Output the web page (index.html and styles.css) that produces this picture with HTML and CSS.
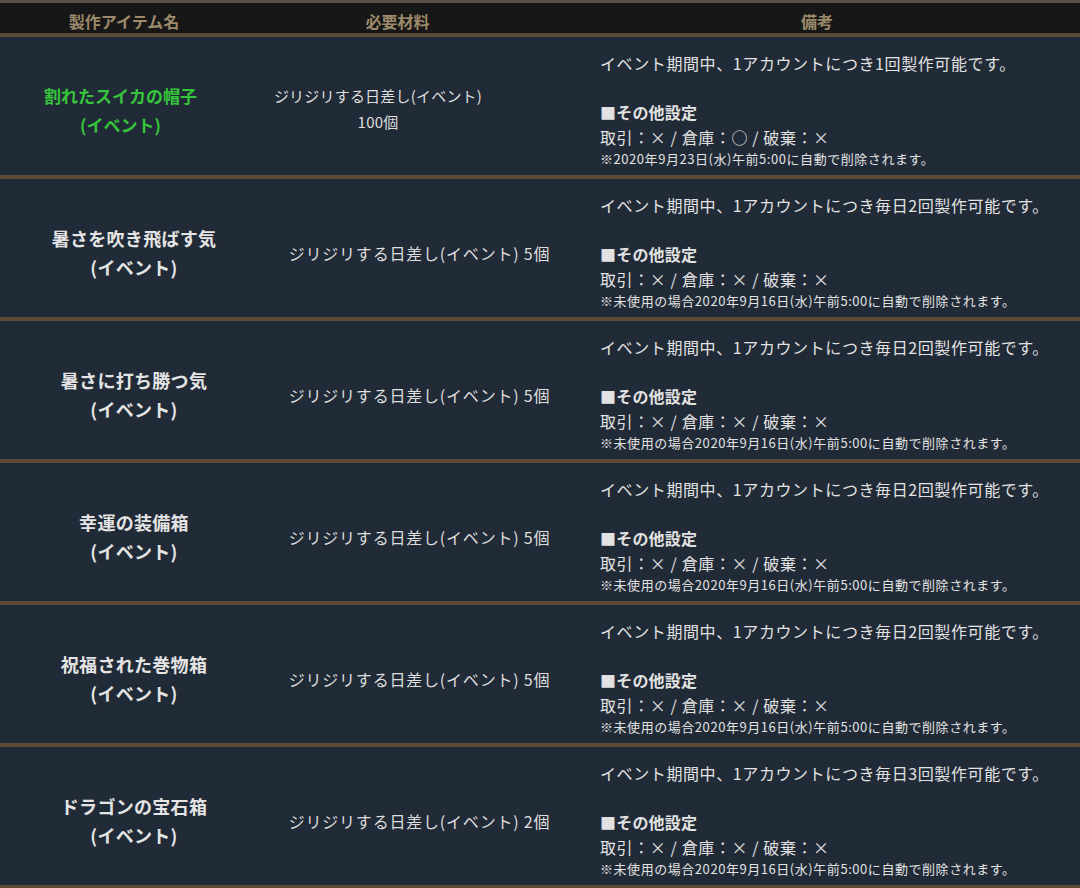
FILE: index.html
```html
<!DOCTYPE html>
<html lang="ja">
<head>
<meta charset="utf-8">
<title>製作アイテム一覧</title>
<link rel="stylesheet" href="styles.css">
</head>
<body>
<div class="craft">
  <div class="head">
    <div class="hcell">製作アイテム名</div>
    <div class="hcell">必要材料</div>
    <div class="hcell hnote">備考</div>
  </div>

  <div class="row row-first">
    <div class="name green">割れたスイカの帽子<br>(イベント)</div>
    <div class="mat">ジリジリする日差し(イベント)<br>100個</div>
    <div class="note">
      <p class="line">イベント期間中、1アカウントにつき1回製作可能です。</p>
      <p class="line blank"></p>
      <p class="line strong">■その他設定</p>
      <p class="line">取引：× / 倉庫：○ / 破棄：×</p>
      <p class="small">※2020年9月23日(水)午前5:00に自動で削除されます。</p>
    </div>
  </div>

  <div class="row">
    <div class="name">暑さを吹き飛ばす気<br>(イベント)</div>
    <div class="mat">ジリジリする日差し(イベント) 5個</div>
    <div class="note">
      <p class="line">イベント期間中、1アカウントにつき毎日2回製作可能です。</p>
      <p class="line blank"></p>
      <p class="line strong">■その他設定</p>
      <p class="line">取引：× / 倉庫：× / 破棄：×</p>
      <p class="small">※未使用の場合2020年9月16日(水)午前5:00に自動で削除されます。</p>
    </div>
  </div>

  <div class="row">
    <div class="name">暑さに打ち勝つ気<br>(イベント)</div>
    <div class="mat">ジリジリする日差し(イベント) 5個</div>
    <div class="note">
      <p class="line">イベント期間中、1アカウントにつき毎日2回製作可能です。</p>
      <p class="line blank"></p>
      <p class="line strong">■その他設定</p>
      <p class="line">取引：× / 倉庫：× / 破棄：×</p>
      <p class="small">※未使用の場合2020年9月16日(水)午前5:00に自動で削除されます。</p>
    </div>
  </div>

  <div class="row">
    <div class="name">幸運の装備箱<br>(イベント)</div>
    <div class="mat">ジリジリする日差し(イベント) 5個</div>
    <div class="note">
      <p class="line">イベント期間中、1アカウントにつき毎日2回製作可能です。</p>
      <p class="line blank"></p>
      <p class="line strong">■その他設定</p>
      <p class="line">取引：× / 倉庫：× / 破棄：×</p>
      <p class="small">※未使用の場合2020年9月16日(水)午前5:00に自動で削除されます。</p>
    </div>
  </div>

  <div class="row">
    <div class="name">祝福された巻物箱<br>(イベント)</div>
    <div class="mat">ジリジリする日差し(イベント) 5個</div>
    <div class="note">
      <p class="line">イベント期間中、1アカウントにつき毎日2回製作可能です。</p>
      <p class="line blank"></p>
      <p class="line strong">■その他設定</p>
      <p class="line">取引：× / 倉庫：× / 破棄：×</p>
      <p class="small">※未使用の場合2020年9月16日(水)午前5:00に自動で削除されます。</p>
    </div>
  </div>

  <div class="row">
    <div class="name">ドラゴンの宝石箱<br>(イベント)</div>
    <div class="mat">ジリジリする日差し(イベント) 2個</div>
    <div class="note">
      <p class="line">イベント期間中、1アカウントにつき毎日3回製作可能です。</p>
      <p class="line blank"></p>
      <p class="line strong">■その他設定</p>
      <p class="line">取引：× / 倉庫：× / 破棄：×</p>
      <p class="small">※未使用の場合2020年9月16日(水)午前5:00に自動で削除されます。</p>
    </div>
  </div>
</div>
</body>
</html>
```

FILE: styles.css
```css
html, body {
  margin: 0;
  padding: 0;
  background: #212b37;
  height: 888px;
  overflow: hidden;
}

body {
  font-family: "Noto Sans CJK JP", "Noto Sans", sans-serif;
  color: #e2e2e2;
}

.craft {
  width: 1080px;
  border-top: 3px solid #57504a;
}

.head {
  display: grid;
  grid-template-columns: 248px 299px 1fr;
  background: #171717;
  padding-top: 6px;
  height: 24px;
  border-bottom: 4px solid #5d4b37;
}

.hcell {
  text-align: center;
  font-size: 16px;
  font-weight: bold;
  line-height: 24px;
  color: #9c8a6a;
}

.hnote {
  padding-left: 7px;
}

.row {
  display: grid;
  grid-template-columns: 268px 303px 1fr;
  height: 138px;
  border-bottom: 4px solid #5d4b37;
}

.row-first {
  grid-template-columns: 241px 274px 1fr;
}

.name,
.mat {
  align-self: center;
  text-align: center;
  padding-top: 9px;
}

.name {
  font-size: 18px;
  font-weight: bold;
  line-height: 28.5px;
  color: #e4e4e4;
  letter-spacing: 0.3px;
}

.name.green {
  font-size: 17px;
  letter-spacing: 0;
  color: #36c43a;
}

.mat {
  font-size: 16px;
  line-height: 26px;
  color: #dedede;
  letter-spacing: 0.8px;
}

.row-first .mat {
  font-size: 15px;
  letter-spacing: 0.2px;
  padding-top: 6px;
}

.note {
  padding: 14px 0 0 29px;
  font-size: 16px;
  color: #e2e2e2;
}

.row-first .note {
  padding-left: 85px;
}

.line {
  margin: 0;
  line-height: 24.6px;
  height: 24.6px;
  white-space: nowrap;
  letter-spacing: 0.6px;
}

.strong {
  font-weight: bold;
  letter-spacing: 0.2px;
}

.small {
  margin: 2px 0 0;
  font-size: 13px;
  line-height: 16px;
  white-space: nowrap;
  letter-spacing: 0.55px;
}
```
